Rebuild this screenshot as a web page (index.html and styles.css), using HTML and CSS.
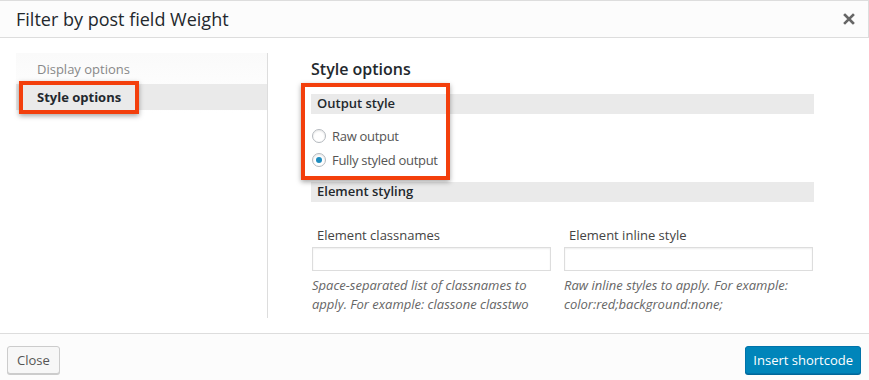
FILE: index.html
```html
<!DOCTYPE html>
<html lang="en">
<head>
    <meta charset="UTF-8">
    <title>Filter by post field Weight</title>
    <link rel="stylesheet" href="styles.css">
</head>
<body>
    <div class="modal">
        <header class="modal-header">
            <h1 class="modal-title">Filter by post field Weight</h1>
            <button class="modal-close" aria-label="Close">
                <svg width="12" height="12" viewBox="0 0 12 12"><path d="M2 2 L10 10 M10 2 L2 10" stroke="#666" stroke-width="2.6" stroke-linecap="square"/></svg>
            </button>
        </header>

        <div class="modal-body">
            <ul class="tab-nav">
                <li class="tab-item">Display options</li>
                <li class="tab-item active"><span class="highlight">Style options</span></li>
            </ul>

            <div class="tab-content">
                <h2 class="content-title">Style options</h2>

                <div class="highlight-box">
                    <div class="section-bar">Output style</div>
                    <div class="radio-list">
                        <label class="radio-row"><span class="radio"></span>Raw output</label>
                        <label class="radio-row"><span class="radio checked"></span>Fully styled output</label>
                    </div>
                </div>

                <div class="section-bar">Element styling</div>

                <div class="field-grid">
                    <div class="field">
                        <label class="field-label">Element classnames</label>
                        <input type="text" class="field-input">
                        <p class="field-desc">Space-separated list of classnames to apply. For example: classone classtwo</p>
                    </div>
                    <div class="field">
                        <label class="field-label">Element inline style</label>
                        <input type="text" class="field-input">
                        <p class="field-desc">Raw inline styles to apply. For example: color:red;background:none;</p>
                    </div>
                </div>
            </div>
        </div>

        <footer class="modal-footer">
            <button class="btn btn-close">Close</button>
            <button class="btn btn-primary">Insert shortcode</button>
        </footer>
    </div>
</body>
</html>
```

FILE: styles.css
```css
body {
    margin: 0;
    font-family: "Open Sans", "Noto Sans", sans-serif;
    font-size: 13px;
    color: #444;
    background: #fff;
}

.modal {
    width: 869px;
    height: 380px;
    display: flex;
    flex-direction: column;
    overflow: hidden;
}

/* Header */
.modal-header {
    height: 36px;
    display: flex;
    align-items: center;
    justify-content: space-between;
    background-color: #fcfcfc;
    border: 1px solid #ddd;
    border-left: none;
    flex-shrink: 0;
}
.modal-title {
    margin: 0;
    padding-left: 16px;
    font-size: 18px;
    font-weight: 400;
    color: #23282d;
}
.modal-close {
    background: none;
    border: none;
    padding: 0;
    margin-right: 13px;
    display: flex;
    cursor: pointer;
}

/* Body */
.modal-body {
    flex: 1;
    display: flex;
    padding-top: 15px;
}

.tab-nav {
    list-style: none;
    margin: 0 0 15px 16px;
    padding: 0;
    width: 251px;
    border-right: 1px solid #ddd;
    background: linear-gradient(#fafafa, #fff 60px);
}
.tab-item {
    height: 31px;
    line-height: 33px;
    padding-left: 21px;
    color: #888;
}
.tab-item.active {
    height: 26px;
    line-height: 26px;
    background-color: #eaeaea;
    color: #23282d;
    font-weight: 700;
    padding-left: 3px;
}
.highlight {
    display: inline-block;
    height: 25px;
    line-height: 25px;
    padding: 0 14px 0 14px;
    border: 4px solid #f33f0c;
    box-shadow: 0 2px 5px rgba(0, 0, 0, 0.35);
    margin-top: -4px;
}

.tab-content {
    width: 503px;
    margin-left: 43px;
}
.content-title {
    margin: 5px 0 14px 0;
    font-size: 16px;
    line-height: 22px;
    font-weight: 600;
    color: #23282d;
}

.section-bar {
    height: 20px;
    line-height: 19px;
    padding-left: 6px;
    background-color: #eaeaea;
    font-weight: 600;
    color: #23282d;
}

.highlight-box {
    position: relative;
    margin-bottom: 4px;
}
.highlight-box::before {
    content: "";
    position: absolute;
    left: -10px;
    top: -11px;
    width: 141px;
    height: 89px;
    border: 4px solid #f33f0c;
    box-shadow: 0 2px 5px rgba(0, 0, 0, 0.35);
    pointer-events: none;
}

.radio-list {
    padding: 12px 0 9px 1px;
    display: flex;
    flex-direction: column;
    gap: 5px;
}
.radio-row {
    display: flex;
    align-items: center;
    height: 19px;
    color: #555;
    letter-spacing: -0.3px;
}
.radio {
    width: 14px;
    height: 14px;
    border: 1px solid #b4b9be;
    border-radius: 50%;
    box-sizing: border-box;
    margin-right: 6px;
    display: flex;
    align-items: center;
    justify-content: center;
    box-shadow: inset 0 1px 2px rgba(0, 0, 0, 0.1);
}
.radio.checked::after {
    content: "";
    width: 6px;
    height: 6px;
    border-radius: 50%;
    background-color: #1e8cbe;
}

.field-grid {
    display: grid;
    grid-template-columns: 239px 249px;
    column-gap: 13px;
    margin-top: 23px;
    padding-left: 1px;
}
.field-label {
    display: block;
    padding-left: 5px;
    color: #444;
    line-height: 20px;
    margin-bottom: 2px;
}
.field-input {
    display: block;
    width: 100%;
    height: 24px;
    box-sizing: border-box;
    border: 1px solid #ddd;
    box-shadow: inset 0 1px 2px rgba(0, 0, 0, 0.07);
    margin: 0;
}
.field-desc {
    margin: 5px 0 0 0;
    font-style: italic;
    color: #666;
    line-height: 19px;
}

/* Footer */
.modal-footer {
    height: 46px;
    flex-shrink: 0;
    display: flex;
    justify-content: space-between;
    align-items: center;
    padding: 0 8px 0 7px;
    border-top: 1px solid #ddd;
    background-color: #fcfcfc;
}
.btn {
    height: 28px;
    padding: 0 10px;
    font-family: inherit;
    font-size: 13px;
    border-radius: 3px;
    cursor: pointer;
    margin-top: 5px;
}
.btn-close {
    background-color: #f7f7f7;
    border: 1px solid #ccc;
    color: #555;
    box-shadow: 0 1px 0 #ccc;
    padding: 0 9px;
}
.btn-primary {
    background-color: #0085ba;
    border: 1px solid #0073aa;
    color: #fff;
    box-shadow: 0 1px 0 #006799;
    padding: 0 7px;
}
```
